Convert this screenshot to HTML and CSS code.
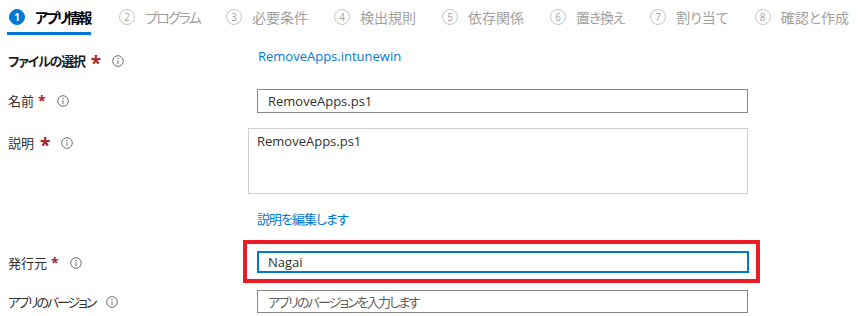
FILE: index.html
```
<!DOCTYPE html>
<html lang="ja">
<head>
<meta charset="utf-8">
<link rel="stylesheet" href="styles.css">
</head>
<body>
<nav class="tabs">
  <div class="tab active"><span class="num">1</span><span class="tlabel t1">アプリ情報</span></div>
  <div class="tab"><span class="num">2</span><span class="tlabel t2">プログラム</span></div>
  <div class="tab"><span class="num">3</span><span class="tlabel">必要条件</span></div>
  <div class="tab"><span class="num">4</span><span class="tlabel">検出規則</span></div>
  <div class="tab"><span class="num">5</span><span class="tlabel">依存関係</span></div>
  <div class="tab"><span class="num">6</span><span class="tlabel t6">置き換え</span></div>
  <div class="tab"><span class="num">7</span><span class="tlabel">割り当て</span></div>
  <div class="tab"><span class="num">8</span><span class="tlabel">確認と作成</span></div>
</nav>
<main class="form">
  <div class="row row-file">
    <div class="label bold"><span class="ltext tight">ファイルの選択</span><span class="req big">*</span><svg class="info" viewBox="0 0 12 12"><circle cx="6" cy="6" r="5.3"/><line x1="6" y1="5.2" x2="6" y2="9"/><circle class="dot" cx="6" cy="3.4" r="0.7"/></svg></div>
    <div class="value"><a class="link file-link">RemoveApps.intunewin</a></div>
  </div>
  <div class="row row-name">
    <div class="label"><span class="ltext">名前</span><span class="req">*</span><svg class="info" viewBox="0 0 12 12"><circle cx="6" cy="6" r="5.3"/><line x1="6" y1="5.2" x2="6" y2="9"/><circle class="dot" cx="6" cy="3.4" r="0.7"/></svg></div>
    <div class="value"><div class="input">RemoveApps.ps1</div></div>
  </div>
  <div class="row row-desc">
    <div class="label top"><span class="ltext">説明</span><span class="req big">*</span><svg class="info" viewBox="0 0 12 12"><circle cx="6" cy="6" r="5.3"/><line x1="6" y1="5.2" x2="6" y2="9"/><circle class="dot" cx="6" cy="3.4" r="0.7"/></svg></div>
    <div class="value"><div class="textarea">RemoveApps.ps1</div></div>
  </div>
  <div class="row row-edit">
    <div class="label"></div>
    <div class="value"><a class="link edit-link">説明を編集します</a></div>
  </div>
  <div class="row row-pub">
    <div class="label"><span class="ltext">発行元</span><span class="req">*</span><svg class="info" viewBox="0 0 12 12"><circle cx="6" cy="6" r="5.3"/><line x1="6" y1="5.2" x2="6" y2="9"/><circle class="dot" cx="6" cy="3.4" r="0.7"/></svg></div>
    <div class="value"><div class="highlight"><div class="input focused">Nagai</div></div></div>
  </div>
  <div class="row row-ver">
    <div class="label"><span class="ltext vtight">アプリのバージョン</span><svg class="info" viewBox="0 0 12 12"><circle cx="6" cy="6" r="5.3"/><line x1="6" y1="5.2" x2="6" y2="9"/><circle class="dot" cx="6" cy="3.4" r="0.7"/></svg></div>
    <div class="value"><div class="input placeholder">アプリのバージョンを入力します</div></div>
  </div>
</main>
</body>
</html>
```
FILE: styles.css
```
* { box-sizing: border-box; }
html, body { margin: 0; padding: 0; background: #fff; }
body {
  font-family: "Open Sans", "Noto Sans CJK JP", sans-serif;
  font-size: 13px;
  color: #323130;
  font-feature-settings: "palt";
  width: 861px;
  height: 316px;
  overflow: hidden;
}
.tabs {
  display: flex;
  padding-left: 7px;
  gap: 24px;
  height: 35px;
  width: 900px;
}
.tab {
  display: flex;
  flex: none;
  white-space: nowrap;
  align-items: center;
  height: 35px;
  padding: 2px 0 0 2px;
  color: #a19f9d;
  font-family: "Noto Sans CJK JP", sans-serif;
  font-size: 14px;
  border-bottom: 3px solid transparent;
}
.tlabel.t1 { letter-spacing: -2.2px; }
.tlabel.t2 { letter-spacing: -1.8px; }
.tlabel.t6 { letter-spacing: -1.2px; }
.tab.active {
  border-bottom-color: #0078d4;
  color: #000;
  font-weight: 700;
  padding-right: 1px;
  margin-right: 2px;
}
.num {
  width: 16px;
  height: 16px;
  flex: none;
  border-radius: 50%;
  border: 1px solid #c8c6c4;
  display: flex;
  align-items: center;
  justify-content: center;
  font-family: "Open Sans", sans-serif;
  font-size: 10px;
  font-weight: 400;
  color: #a19f9d;
  margin-right: 10px;
  letter-spacing: 0;
}
.tab.active .num {
  background: #0078d4;
  border-color: #0078d4;
  color: #fff;
  font-weight: 700;
}
.form { padding-left: 8px; }
.row { display: flex; }
.label {
  width: 240px;
  flex: none;
  display: flex;
  align-items: center;
  font-family: "Noto Sans CJK JP", sans-serif;
  font-size: 13px;
  color: #323130;
  line-height: 20px;
  white-space: nowrap;
}
.ltext.tight { letter-spacing: -1.2px; }
.ltext.vtight { letter-spacing: -2.1px; }
.label.bold { font-weight: 700; color: #201f1e; }
.label.top { align-self: flex-start; margin-top: 4px; }
.req {
  color: #a4262c;
  margin-left: 4px;
  font-family: "Open Sans", sans-serif;
  font-size: 14px;
  font-weight: 700;
}
.req.big {
  font-size: 19px;
  margin-left: 6px;
  line-height: 18px;
  padding-top: 4px;
}
.info {
  width: 12px;
  height: 12px;
  flex: none;
  margin-left: 11px;
  fill: none;
  stroke: #605e5c;
  stroke-width: 0.9;
}
.info .dot { fill: #605e5c; stroke: none; }
.value { display: flex; align-items: center; }
.link { color: #0078d4; text-decoration: none; line-height: 20px; }
.row-file { margin-top: 10px; height: 30px; }
.row-file .label { padding-top: 2px; }
.row-file .value { align-items: flex-start; padding-left: 10px; padding-top: 1px; }
.row-name { margin-top: 14px; height: 24px; }
.row-name .value, .row-ver .value { padding-left: 9px; }
.input {
  width: 491px;
  height: 24px;
  border: 1px solid #8a8886;
  padding: 0 10px;
  display: flex;
  align-items: center;
  color: #323130;
  white-space: nowrap;
}
.input.placeholder {
  color: #605e5c;
  font-family: "Noto Sans CJK JP", sans-serif;
  height: 23px;
  letter-spacing: -1.9px;
}
.row-desc { margin-top: 15px; }
.textarea {
  width: 500px;
  height: 66px;
  border: 1px solid #d0d0d0;
  padding: 2px 8px;
  line-height: 20px;
}
.row-edit { margin-top: 15px; height: 20px; }
.row-edit .value { padding-left: 9px; }
.edit-link { font-family: "Noto Sans CJK JP", sans-serif; letter-spacing: -1px; }
.row-pub { margin-top: 11px; height: 43px; }
.row-pub .label { padding-top: 2px; }
.row-pub .value { padding-left: 0; margin-left: -5px; }
.highlight {
  border: 4px solid #ed1c24;
  padding: 7px 7px 6px 10px;
  width: 517px;
  height: 43px;
}
.input.focused {
  width: 492px;
  height: 22px;
  border: 2px solid #0078d4;
  padding-left: 9px;
}
.row-ver { margin-top: 7px; height: 23px; }
```
